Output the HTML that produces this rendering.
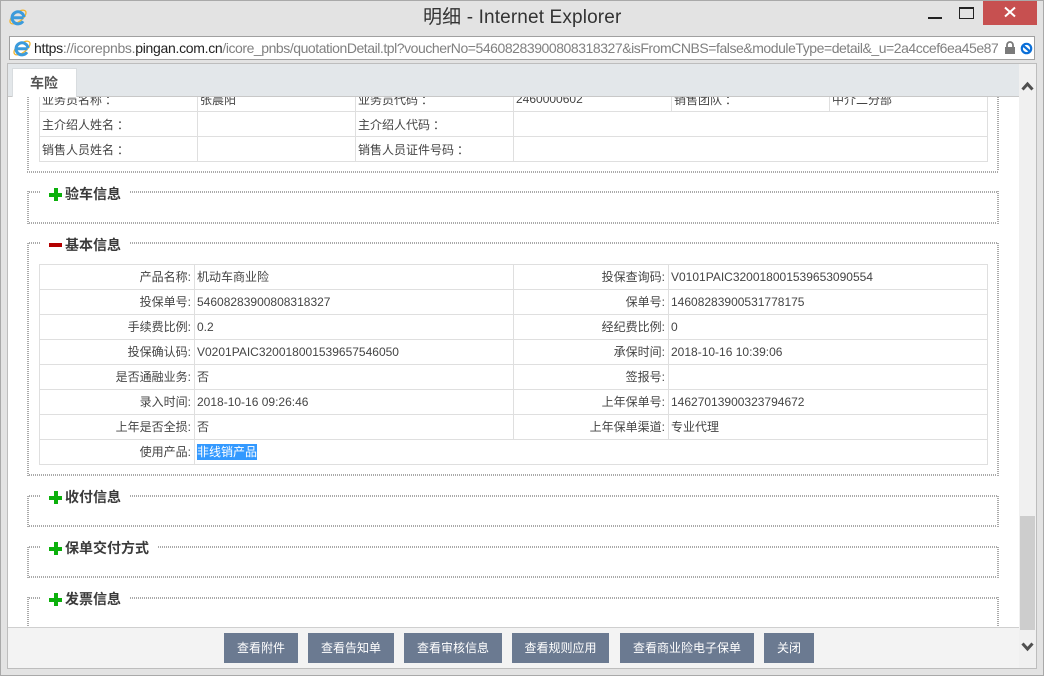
<!DOCTYPE html>
<html><head><meta charset="utf-8"><title>明细 - Internet Explorer</title>
<style>
html,body{margin:0;padding:0}
body{width:1044px;height:676px;overflow:hidden;position:relative;background:#e3e3e3;font-family:"Liberation Sans","WenQuanYi Zen Hei","Noto Sans CJK SC",sans-serif;font-size:12px;color:#444}
div{position:absolute;box-sizing:border-box}
.t{white-space:nowrap;line-height:16px;height:16px}
.r{text-align:right}
.c{margin-left:3px}
.lh{height:1px;background:#dfdfdf}
.lv{width:1px;background:#dfdfdf}
.dh{height:2px;background:repeating-linear-gradient(90deg,#aaa 0 1px,#fff 1px 2px)}
.dv{width:2px;background:repeating-linear-gradient(0deg,#aaa 0 1px,#fff 1px 2px)}
.lg{font-size:14px;font-weight:bold;color:#3a3a3a;white-space:nowrap;line-height:16px;height:16px}
.p1{width:13px;height:4px;background:#0cb00c}
.p2{width:4px;height:13px;background:#0cb00c}
.b{top:633px;height:30px;background:#6b7a91;color:#fff;font-size:12px;line-height:30px;text-align:center;white-space:nowrap}
</style></head><body>
<div style="left:0;top:0;width:1044px;height:676px;border:1px solid #a9a9a9"></div>

<svg style="position:absolute;left:9px;top:8px" width="18" height="18" viewBox="0 0 18 18"><ellipse cx="9" cy="9" rx="9.500" ry="4.500" transform="rotate(-38 9 9)" fill="none" stroke="#f2b32a" stroke-width="1.300"/><path d="M4 9.700H14.500M14 13.200A6 6 0 1 1 15 9.200" fill="none" stroke="#3b9bdc" stroke-width="3"/></svg>
<div class="t" style="left:423px;top:7px;font-size:19px;line-height:22px;height:22px;color:#333;letter-spacing:.14px">明细 - Internet Explorer</div>

<div style="left:928px;top:17px;width:14px;height:2px;background:#222"></div>
<div style="left:959px;top:7px;width:15px;height:12px;border:1px solid #222;border-top-width:2px"></div>
<div style="left:983px;top:1px;width:54px;height:24px;background:#c75050"></div>
<svg style="position:absolute;left:1003px;top:6px" width="14" height="12" viewBox="0 0 14 12"><path d="M2 1.500L12 10.500M12 1.500L2 10.500" stroke="#fff" stroke-width="2"/></svg>

<div style="left:9px;top:36px;width:1026px;height:24px;background:#fff;border:1px solid #a0a0a0"></div>
<svg style="position:absolute;left:13px;top:39px" width="18" height="18" viewBox="0 0 18 18"><ellipse cx="9" cy="9" rx="9.500" ry="4.500" transform="rotate(-38 9 9)" fill="none" stroke="#f2b32a" stroke-width="1.300"/><path d="M4 9.700H14.500M14 13.200A6 6 0 1 1 15 9.200" fill="none" stroke="#3b9bdc" stroke-width="3"/></svg>
<div style="left:34px;top:39px;width:964px;height:19px;overflow:hidden;white-space:nowrap;font-size:14px;line-height:19px;color:#808080;letter-spacing:-.3px"><span style="color:#222">https</span>://icorepnbs.<span style="color:#222">pingan.com.cn</span><span style="letter-spacing:-.45px">/icore_pnbs/quotationDetail.tpl?voucherNo=54608283900808318327&amp;isFromCNBS=false&amp;moduleType=detail&amp;_u=2a4ccef6ea45e87b</span></div>
<svg style="position:absolute;left:1004px;top:41px" width="12" height="14" viewBox="0 0 12 14"><path d="M3 6V4a3 3 0 0 1 6 0v2" fill="none" stroke="#7a7a7a" stroke-width="1.800"/><rect x="1" y="6" width="10" height="7" fill="#7a7a7a"/></svg>
<svg style="position:absolute;left:1020px;top:42px" width="13" height="13" viewBox="0 0 13 13"><circle cx="6.500" cy="6.500" r="4.700" fill="#fff" stroke="#0a6fd8" stroke-width="2.200"/><path d="M3 3.500L10 9.500" stroke="#0a6fd8" stroke-width="2.200"/></svg>

<div style="left:7px;top:63px;width:1030px;height:606px;background:#fff;border:1px solid #bdbdbd"></div>

<div class="lh" style="left:39px;top:111px;width:949px"></div>
<div class="lh" style="left:39px;top:136px;width:949px"></div>
<div class="lh" style="left:39px;top:161px;width:949px"></div>
<div class="lv" style="left:39px;top:90px;height:72px"></div>
<div class="lv" style="left:197px;top:90px;height:72px"></div>
<div class="lv" style="left:355px;top:90px;height:72px"></div>
<div class="lv" style="left:513px;top:90px;height:72px"></div>
<div class="lv" style="left:671px;top:90px;height:21px"></div>
<div class="lv" style="left:829px;top:90px;height:21px"></div>
<div class="lv" style="left:987px;top:90px;height:72px"></div>
<div class="t" style="left:42px;top:92px">业务员名称<span class="c">：</span></div>
<div class="t" style="left:200px;top:92px">张晨阳</div>
<div class="t" style="left:358px;top:92px">业务员代码<span class="c">：</span></div>
<div class="t" style="left:516px;top:91px">2460000602</div>
<div class="t" style="left:674px;top:92px">销售团队<span class="c">：</span></div>
<div class="t" style="left:832px;top:92px">中介二分部</div>
<div class="t" style="left:42px;top:117px">主介绍人姓名<span class="c">：</span></div>
<div class="t" style="left:358px;top:117px">主介绍人代码<span class="c">：</span></div>
<div class="t" style="left:42px;top:142px">销售人员姓名<span class="c">：</span></div>
<div class="t" style="left:358px;top:142px">销售人员证件号码<span class="c">：</span></div>

<div class="dv" style="left:27px;top:90px;height:82px"></div>
<div class="dv" style="left:997px;top:90px;height:82px"></div>
<div class="dh" style="left:27px;top:171px;width:972px"></div>

<div class="dh" style="left:27px;top:191px;width:14px"></div>
<div class="dh" style="left:130px;top:191px;width:869px"></div>
<div class="dh" style="left:27px;top:222px;width:972px"></div>
<div class="dv" style="left:27px;top:191px;height:33px"></div>
<div class="dv" style="left:997px;top:191px;height:33px"></div>
<div class="p1" style="left:49px;top:193px"></div><div class="p2" style="left:54px;top:188px"></div>
<div class="lg" style="left:65px;top:186px">验车信息</div>

<div class="dh" style="left:27px;top:242px;width:14px"></div>
<div class="dh" style="left:130px;top:242px;width:869px"></div>
<div class="dh" style="left:27px;top:474px;width:972px"></div>
<div class="dv" style="left:27px;top:242px;height:234px"></div>
<div class="dv" style="left:997px;top:242px;height:234px"></div>
<div style="left:49px;top:243px;width:13px;height:4px;background:#b30000"></div>
<div class="lg" style="left:65px;top:237px">基本信息</div>

<div class="lh" style="left:39px;top:264px;width:949px"></div>
<div class="lh" style="left:39px;top:289px;width:949px"></div>
<div class="lh" style="left:39px;top:314px;width:949px"></div>
<div class="lh" style="left:39px;top:339px;width:949px"></div>
<div class="lh" style="left:39px;top:364px;width:949px"></div>
<div class="lh" style="left:39px;top:389px;width:949px"></div>
<div class="lh" style="left:39px;top:414px;width:949px"></div>
<div class="lh" style="left:39px;top:439px;width:949px"></div>
<div class="lh" style="left:39px;top:464px;width:949px"></div>
<div class="lv" style="left:39px;top:264px;height:201px"></div>
<div class="lv" style="left:194px;top:264px;height:201px"></div>
<div class="lv" style="left:513px;top:264px;height:176px"></div>
<div class="lv" style="left:668px;top:264px;height:176px"></div>
<div class="lv" style="left:987px;top:264px;height:201px"></div>

<div class="t r" style="left:40px;width:151px;top:269px">产品名称:</div><div class="t" style="left:197px;top:269px">机动车商业险</div>
<div class="t r" style="left:514px;width:151px;top:269px">投保查询码:</div><div class="t" style="left:671px;top:269px">V0101PAIC320018001539653090554</div>
<div class="t r" style="left:40px;width:151px;top:294px">投保单号:</div><div class="t" style="left:197px;top:294px">54608283900808318327</div>
<div class="t r" style="left:514px;width:151px;top:294px">保单号:</div><div class="t" style="left:671px;top:294px">14608283900531778175</div>
<div class="t r" style="left:40px;width:151px;top:319px">手续费比例:</div><div class="t" style="left:197px;top:319px">0.2</div>
<div class="t r" style="left:514px;width:151px;top:319px">经纪费比例:</div><div class="t" style="left:671px;top:319px">0</div>
<div class="t r" style="left:40px;width:151px;top:344px">投保确认码:</div><div class="t" style="left:197px;top:344px">V0201PAIC320018001539657546050</div>
<div class="t r" style="left:514px;width:151px;top:344px">承保时间:</div><div class="t" style="left:671px;top:344px">2018-10-16 10:39:06</div>
<div class="t r" style="left:40px;width:151px;top:369px">是否通融业务:</div><div class="t" style="left:197px;top:369px">否</div>
<div class="t r" style="left:514px;width:151px;top:369px">签报号:</div>
<div class="t r" style="left:40px;width:151px;top:394px">录入时间:</div><div class="t" style="left:197px;top:394px">2018-10-16 09:26:46</div>
<div class="t r" style="left:514px;width:151px;top:394px">上年保单号:</div><div class="t" style="left:671px;top:394px">14627013900323794672</div>
<div class="t r" style="left:40px;width:151px;top:419px">上年是否全损:</div><div class="t" style="left:197px;top:419px">否</div>
<div class="t r" style="left:514px;width:151px;top:419px">上年保单渠道:</div><div class="t" style="left:671px;top:419px">专业代理</div>
<div class="t r" style="left:40px;width:151px;top:444px">使用产品:</div>
<div class="t" style="left:197px;top:444px;width:60px;background:#3399ff;color:#fff">非线销产品</div>

<div class="dh" style="left:27px;top:495px;width:14px"></div>
<div class="dh" style="left:130px;top:495px;width:869px"></div>
<div class="dh" style="left:27px;top:525px;width:972px"></div>
<div class="dv" style="left:27px;top:495px;height:32px"></div>
<div class="dv" style="left:997px;top:495px;height:32px"></div>
<div class="p1" style="left:49px;top:496px"></div><div class="p2" style="left:54px;top:491px"></div>
<div class="lg" style="left:65px;top:489px">收付信息</div>

<div class="dh" style="left:27px;top:546px;width:14px"></div>
<div class="dh" style="left:158px;top:546px;width:841px"></div>
<div class="dh" style="left:27px;top:576px;width:972px"></div>
<div class="dv" style="left:27px;top:546px;height:32px"></div>
<div class="dv" style="left:997px;top:546px;height:32px"></div>
<div class="p1" style="left:49px;top:547px"></div><div class="p2" style="left:54px;top:542px"></div>
<div class="lg" style="left:65px;top:540px">保单交付方式</div>

<div class="dh" style="left:27px;top:597px;width:14px"></div>
<div class="dh" style="left:130px;top:597px;width:869px"></div>
<div class="dv" style="left:27px;top:597px;height:31px"></div>
<div class="dv" style="left:997px;top:597px;height:31px"></div>
<div class="p1" style="left:49px;top:598px"></div><div class="p2" style="left:54px;top:593px"></div>
<div class="lg" style="left:65px;top:591px">发票信息</div>

<div style="left:8px;top:64px;width:1011px;height:33px;background:#e3e7ea;border-bottom:1px solid #c8c8c8"></div>
<div style="left:12px;top:68px;width:65px;height:29px;background:#fff;border:1px solid #d8dcdf;border-bottom:none"></div>
<div class="t" style="left:30px;top:75px;font-size:14px;font-weight:bold;color:#555">车险</div>

<div style="left:8px;top:627px;width:1011px;height:41px;background:#f3f3f3;border-top:1px solid #cfcfcf"></div>
<div class="b" style="left:224px;width:74px">查看附件</div>
<div class="b" style="left:308px;width:86px">查看告知单</div>
<div class="b" style="left:404px;width:98px">查看审核信息</div>
<div class="b" style="left:512px;width:97px">查看规则应用</div>
<div class="b" style="left:620px;width:134px">查看商业险电子保单</div>
<div class="b" style="left:764px;width:50px">关闭</div>

<div style="left:1019px;top:64px;width:17px;height:604px;background:#f0f0f0"></div>
<div style="left:1020px;top:516px;width:15px;height:114px;background:#cdcdcd"></div>
<svg style="position:absolute;left:1021px;top:81px" width="13" height="10" viewBox="0 0 13 10"><path d="M1.500 8.500L6.500 3L11.500 8.500" fill="none" stroke="#505050" stroke-width="3"/></svg>
<svg style="position:absolute;left:1021px;top:642px" width="13" height="10" viewBox="0 0 13 10"><path d="M1.500 1.500L6.500 7L11.500 1.500" fill="none" stroke="#505050" stroke-width="3"/></svg>
</body></html>
